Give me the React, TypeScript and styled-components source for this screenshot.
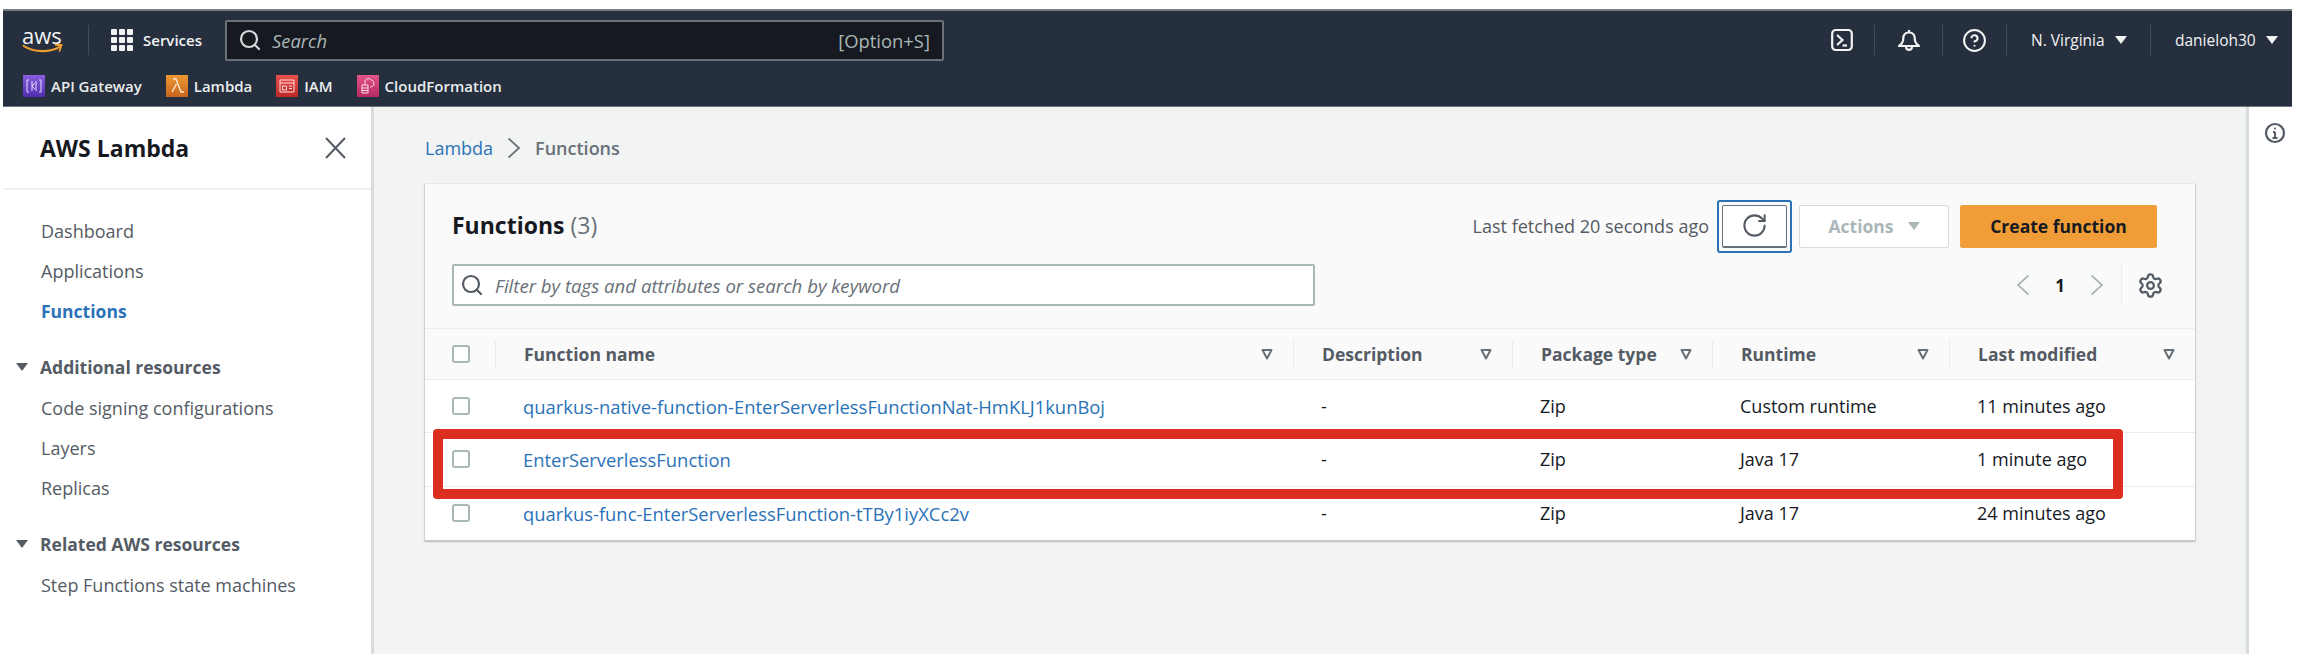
import React from "react";
import styled, { createGlobalStyle } from "styled-components";
import { RotateCw, Search, Settings, CircleHelp } from "lucide-react";

const GlobalStyle = createGlobalStyle`
  html, body {
    margin: 0;
    padding: 0;
    background: #fff;
    font-family: "Open Sans", "Noto Sans", sans-serif;
    color: #545b64;
  }
  * { box-sizing: border-box; }
`;

const Page = styled.div`
  width: 2300px;
  height: 668px;
  padding: 9px 8px 0 3px;
  overflow: hidden;
`;

const TopNav = styled.header`
  height: 98px;
  background: #252f3e;
  border-top: 2px solid #777c82;
  border-bottom: 1px solid #6c7480;
  color: #f2f3f3;
`;

const NavRow = styled.div`
  display: flex;
  align-items: center;
  height: 58px;
  padding-left: 19px;
`;

const Logo = styled.div`
  display: flex;
  flex-direction: column;
  width: 42px;
  height: 32px;
  svg { display: block; margin-top: -3px; }
`;

const LogoText = styled.span`
  height: 24px;
  line-height: 22px;
  font-size: 22px;
  color: #f2f3f3;
`;

const Divider = styled.span`
  width: 1px;
  height: 30px;
  margin-left: 24px;
  background: #414b59;
`;

const Services = styled.div`
  display: flex;
  align-items: center;
  gap: 10px;
  margin-left: 22px;
  font-size: 15px;
  font-weight: 600;
`;

const Dots = styled.div`
  display: grid;
  grid-template-columns: repeat(3, 6px);
  grid-auto-rows: 6px;
  gap: 2px;
  span { background: #f2f3f3; border-radius: 1px; }
`;

const SearchBox = styled.div`
  display: flex;
  align-items: center;
  width: 719px;
  height: 41px;
  margin-left: 23px;
  padding: 0 12px 0 11px;
  background: #16191f;
  border: 2px solid #687078;
  border-radius: 2px;
  color: #aab7b8;
  font-size: 18.4px;
`;

const SearchHint = styled.span`
  margin-left: 10px;
  font-style: italic;
`;

const Shortcut = styled.span`
  margin-left: auto;
`;

const NavRight = styled.div`
  display: flex;
  align-items: center;
  margin-left: auto;
`;

const NavIcon = styled.div<{ $width: number }>`
  display: flex;
  align-items: center;
  justify-content: center;
  width: ${(p) => p.$width}px;
  height: 30px;
  border-right: 1px solid #414b59;
  svg { display: block; }
`;

const NavMenu = styled.div<{ $width: number; $last?: boolean }>`
  display: flex;
  align-items: center;
  gap: 10px;
  width: ${(p) => p.$width}px;
  height: 30px;
  padding-left: 24px;
  border-right: ${(p) => (p.$last ? "none" : "1px solid #414b59")};
  font-size: 15.5px;
`;

const Caret = styled.span<{ $color?: string }>`
  display: inline-block;
  width: 0;
  height: 0;
  border-left: 6px solid transparent;
  border-right: 6px solid transparent;
  border-top: 8px solid ${(p) => p.$color ?? "#f2f3f3"};
`;

const Favorites = styled.div`
  display: flex;
  align-items: center;
  height: 37px;
  padding: 0 0 3px 20px;
  font-size: 15px;
  font-weight: 600;
`;

const Favorite = styled.div`
  display: flex;
  align-items: center;
  gap: 6px;
  margin-right: 24px;
  color: #eaeded;
`;

const ServiceIcon = styled.div<{ $from: string; $to: string }>`
  display: flex;
  align-items: center;
  justify-content: center;
  width: 22px;
  height: 22px;
  background: linear-gradient(0deg, ${(p) => p.$from}, ${(p) => p.$to});
`;

const Shell = styled.div`
  display: flex;
  height: 547px;
`;

const Sidebar = styled.aside`
  flex: none;
  width: 371px;
  background: #fff;
  border-right: 3px solid #d9dcdd;
`;

const SideHeader = styled.div`
  display: flex;
  align-items: center;
  justify-content: space-between;
  height: 83px;
  padding: 0 25px 0 37px;
  border-bottom: 2px solid #f0f1f1;
  color: #16191f;
  font-size: 23px;
  font-weight: 700;
`;

const SideList = styled.nav`
  padding-top: 21px;
`;

const SideItem = styled.div<{ $active?: boolean }>`
  height: 40px;
  padding-left: 38px;
  line-height: 40px;
  font-size: ${(p) => (p.$active ? 17.5 : 18)}px;
  font-weight: ${(p) => (p.$active ? 700 : 400)};
  color: ${(p) => (p.$active ? "#2a72b8" : "#545b64")};
`;

const SideSection = styled.div`
  display: flex;
  align-items: center;
  gap: 12px;
  height: 40px;
  margin-top: 16px;
  margin-bottom: 1px;
  padding-left: 13px;
  font-size: 17.5px;
  font-weight: 700;
`;

const Main = styled.main`
  flex: 1;
  padding: 0 51px;
  background: #f2f3f3;
`;

const Breadcrumb = styled.div`
  display: flex;
  align-items: center;
  gap: 14px;
  height: 77px;
  padding-top: 5px;
  font-size: 18px;
  font-weight: 600;
  color: #687078;
`;

const Crumb = styled.span`
  color: #2a72b8;
  font-weight: 400;
`;

const CardWrap = styled.div`
  position: relative;
`;

const Card = styled.section`
  background: #fff;
  border-bottom: 2px solid #c4cacc;
  box-shadow: 1px 0 1px rgba(0, 28, 36, 0.15), -1px 0 1px rgba(0, 28, 36, 0.15);
`;

const CardHead = styled.div`
  height: 145px;
  padding: 21px 38px 0 27px;
  background: #fafafa;
  border-bottom: 1px solid #eaeded;
`;

const TitleRow = styled.div`
  display: flex;
  align-items: center;
  height: 43px;
`;

const Title = styled.h2`
  margin: 0;
  padding-bottom: 4px;
  color: #16191f;
  font-size: 23px;
  font-weight: 700;
  span { margin-left: 6px; color: #687078; font-weight: 400; }
`;

const Fetched = styled.span`
  margin-left: auto;
  margin-right: 8px;
  padding-bottom: 2px;
  font-size: 18px;
`;

const Focus = styled.div`
  margin-right: 7px;
  padding: 3px;
  border: 2px solid #2a72b8;
  border-radius: 3px;
`;

const Button = styled.div<{ $width: number; $variant?: "plain" | "disabled" | "primary" }>`
  display: flex;
  align-items: center;
  justify-content: center;
  gap: 14px;
  width: ${(p) => p.$width}px;
  height: 43px;
  margin-left: ${(p) => (p.$variant === "primary" ? 11 : 0)}px;
  padding-bottom: 1px;
  border-radius: 2px;
  font-size: 17.5px;
  font-weight: 700;
  border: 1px solid
    ${(p) => (p.$variant === "primary" ? "#f0a03c" : p.$variant === "disabled" ? "#d5dbdb" : "#687078")};
  background: ${(p) => (p.$variant === "primary" ? "#f09d38" : "#fff")};
  color: ${(p) => (p.$variant === "primary" ? "#16191f" : p.$variant === "disabled" ? "#aab7b8" : "#545b64")};
  ${(p) => (p.$variant === "plain" ? "border-bottom-width: 2px;" : "")}
`;

const FilterRow = styled.div`
  display: flex;
  align-items: center;
  height: 42px;
  margin-top: 16px;
`;

const FilterBox = styled.div`
  display: flex;
  align-items: center;
  gap: 11px;
  width: 863px;
  height: 42px;
  padding-left: 6px;
  background: #fff;
  border: 2px solid #aab7b8;
  border-radius: 2px;
  color: #687078;
  font-size: 18.6px;
  font-style: italic;
`;

const Pager = styled.div`
  display: flex;
  align-items: center;
  margin-left: auto;
  margin-right: -7px;
  height: 42px;
  color: #aab7b8;
`;

const PageNumber = styled.span`
  margin: 0 25px;
  color: #16191f;
  font-size: 17px;
  font-weight: 700;
`;

const PagerTools = styled.div`
  display: flex;
  align-items: center;
  height: 42px;
  margin-left: 17px;
  padding-left: 15px;
  border-left: 1px solid #eaeded;
  color: #545b64;
`;

const TableGrid = styled.div`
  display: grid;
  grid-template-columns: 70px 798px 219px 200px 237px 1fr;
  align-items: center;
`;

const HeadRow = styled(TableGrid)`
  height: 51px;
  background: #fafafa;
  border-bottom: 1px solid #eaeded;
`;

const BodyRow = styled(TableGrid)<{ $last?: boolean }>`
  height: 53.33px;
  background: #fff;
  border-bottom: ${(p) => (p.$last ? "none" : "1px solid #eaeded")};
`;

const CheckCell = styled.div`
  padding-left: 27px;
`;

const Checkbox = styled.div`
  width: 18px;
  height: 18px;
  background: #fff;
  border: 2px solid #aab7b8;
  border-radius: 3px;
`;

const HeadCell = styled.div`
  display: flex;
  align-items: center;
  justify-content: space-between;
  height: 28px;
  padding: 0 20px 0 28px;
  border-left: 1px solid #eaeded;
  font-size: 17.5px;
  font-weight: 700;
`;

const Cell = styled.div`
  padding-left: 28px;
  color: #16191f;
  font-size: 18px;
`;

const FunctionLink = styled.span`
  color: #2a72b8;
  font-size: 18.4px;
`;

const RedBox = styled.div`
  position: absolute;
  left: 8px;
  top: 245px;
  width: 1690px;
  height: 70px;
  border: 10px solid #dc2e20;
  border-radius: 4px;
`;

const InfoRail = styled.aside`
  flex: none;
  width: 46px;
  padding: 15px 0 0 15px;
  background: #fff;
  border-left: 3px solid #d9dcdd;
  color: #545b64;
  svg { display: block; }
`;

const Chevron = ({ left }: { left?: boolean }) => (
  <svg width="14" height="22" viewBox="0 0 14 22" fill="none" stroke="currentColor" strokeWidth="1.8">
    <path d={left ? "M12.5 1.5L2 11l10.5 9.5" : "M1.5 1.5L12 11 1.5 20.5"} />
  </svg>
);

const SortIcon = () => (
  <svg width="12" height="12" viewBox="0 0 12 12" fill="none" stroke="#687078" strokeWidth="2">
    <path d="M1.5 2h9L6 10.5z" strokeLinejoin="round" />
  </svg>
);

const columns = ["Function name", "Description", "Package type", "Runtime", "Last modified"];

const rows = [
  ["quarkus-native-function-EnterServerlessFunctionNat-HmKLJ1kunBoj", "Zip", "Custom runtime", "11 minutes ago"],
  ["EnterServerlessFunction", "Zip", "Java 17", "1 minute ago"],
  ["quarkus-func-EnterServerlessFunction-tTBy1iyXCc2v", "Zip", "Java 17", "24 minutes ago"],
];

const App = () => {
  return (
    <>
      <GlobalStyle />
      <Page>
        <TopNav>
          <NavRow>
            <Logo>
              <LogoText>aws</LogoText>
              <svg width="42" height="12" viewBox="0 0 42 12" fill="none" stroke="#ec9b30" strokeLinecap="round">
                <path d="M1 2c11 7 27 7 37 1" strokeWidth="2.2" />
                <path d="M34 1l6 0-2 6" strokeWidth="2" />
              </svg>
            </Logo>
            <Divider />
            <Services>
              <Dots>
                {Array.from({ length: 9 }).map((_, i) => (
                  <span key={i} />
                ))}
              </Dots>
              Services
            </Services>
            <SearchBox>
              <Search size={24} color="#d5dbdb" strokeWidth={2.2} />
              <SearchHint>Search</SearchHint>
              <Shortcut>[Option+S]</Shortcut>
            </SearchBox>
            <NavRight>
              <NavIcon $width={66}>
                <svg width="22" height="24" viewBox="0 0 22 24" fill="none" stroke="#f2f3f3" strokeWidth="2.2">
                  <rect x="1.2" y="2" width="19.6" height="20" rx="3.5" />
                  <path d="M6 7l5.5 5L6 17" />
                  <path d="M11.5 17.5H16" />
                </svg>
              </NavIcon>
              <NavIcon $width={68}>
                <svg width="24" height="24" viewBox="0 0 24 24" fill="none" stroke="#f2f3f3" strokeWidth="2.2" strokeLinejoin="round">
                  <path d="M12 2v2.5" />
                  <path d="M12 4.5c-3.8 0-5.8 2.7-5.8 6.5 0 3-1.4 5-4.2 7h20c-2.8-2-4.2-4-4.2-7 0-3.8-2-6.5-5.8-6.5z" />
                  <path d="M9 18.5c0 4.5 6 4.5 6 0" />
                </svg>
              </NavIcon>
              <NavIcon $width={64}>
                <CircleHelp size={25} strokeWidth={2} />
              </NavIcon>
              <NavMenu $width={144}>
                N. Virginia <Caret />
              </NavMenu>
              <NavMenu $width={141} $last>
                danieloh30 <Caret />
              </NavMenu>
            </NavRight>
          </NavRow>
          <Favorites>
            <Favorite>
              <ServiceIcon $from="#4d2fae" $to="#8a5ce0">
                <svg width="16" height="16" viewBox="0 0 16 16" fill="none" stroke="#e6dcff" strokeWidth="1">
                  <path d="M3 2H1v12h2M13 2h2v12h-2M6 3v10M10 3v10M6 8l3-3M6 8l3 3" />
                </svg>
              </ServiceIcon>
              API Gateway
            </Favorite>
            <Favorite>
              <ServiceIcon $from="#c8641f" $to="#ee9a33">
                <svg width="16" height="18" viewBox="0 0 16 18" fill="none" stroke="#ffe9cc" strokeWidth="1.4">
                  <path d="M4 2h3l5 13h3M7.5 7L3 15" />
                </svg>
              </ServiceIcon>
              Lambda
            </Favorite>
            <Favorite>
              <ServiceIcon $from="#bb2a28" $to="#e8504c">
                <svg width="16" height="14" viewBox="0 0 16 14" fill="none" stroke="#ffd9d9" strokeWidth="1">
                  <path d="M1 1h14v12H1zM1 4h14M3.5 7h4v4h-4zM10 7h3M10 9.5h3" />
                </svg>
              </ServiceIcon>
              IAM
            </Favorite>
            <Favorite>
              <ServiceIcon $from="#b52a62" $to="#e2548a">
                <svg width="16" height="18" viewBox="0 0 16 18" fill="none" stroke="#ffdbe8" strokeWidth="1">
                  <path d="M2 8h6v8H2zM2 11h6M2 13.5h6M5 8V4c1-3 5-3 6-1 2 0 3 2 3 4s-2 3-4 3" />
                </svg>
              </ServiceIcon>
              CloudFormation
            </Favorite>
          </Favorites>
        </TopNav>
        <Shell>
          <Sidebar>
            <SideHeader>
              AWS Lambda
              <svg width="21" height="22" viewBox="0 0 21 22" fill="none" stroke="#545b64" strokeWidth="2">
                <path d="M1 1l19 20M20 1L1 21" />
              </svg>
            </SideHeader>
            <SideList>
              <SideItem>Dashboard</SideItem>
              <SideItem>Applications</SideItem>
              <SideItem $active>Functions</SideItem>
              <SideSection>
                <Caret $color="#545b64" />
                Additional resources
              </SideSection>
              <SideItem>Code signing configurations</SideItem>
              <SideItem>Layers</SideItem>
              <SideItem>Replicas</SideItem>
              <SideSection>
                <Caret $color="#545b64" />
                Related AWS resources
              </SideSection>
              <SideItem>Step Functions state machines</SideItem>
            </SideList>
          </Sidebar>
          <Main>
            <Breadcrumb>
              <Crumb>Lambda</Crumb>
              <Chevron />
              Functions
            </Breadcrumb>
            <CardWrap>
              <Card>
                <CardHead>
                  <TitleRow>
                    <Title>
                      Functions<span>(3)</span>
                    </Title>
                    <Fetched>Last fetched 20 seconds ago</Fetched>
                    <Focus>
                      <Button $width={65} $variant="plain">
                        <RotateCw size={27} strokeWidth={1.8} />
                      </Button>
                    </Focus>
                    <Button $width={150} $variant="disabled">
                      Actions <Caret $color="#aab7b8" />
                    </Button>
                    <Button $width={197} $variant="primary">
                      Create function
                    </Button>
                  </TitleRow>
                  <FilterRow>
                    <FilterBox>
                      <Search size={24} color="#545b64" strokeWidth={2.2} />
                      Filter by tags and attributes or search by keyword
                    </FilterBox>
                    <Pager>
                      <Chevron left />
                      <PageNumber>1</PageNumber>
                      <Chevron />
                      <PagerTools>
                        <Settings size={27} strokeWidth={2} />
                      </PagerTools>
                    </Pager>
                  </FilterRow>
                </CardHead>
                <HeadRow>
                  <CheckCell>
                    <Checkbox />
                  </CheckCell>
                  {columns.map((name) => (
                    <HeadCell key={name}>
                      {name}
                      <SortIcon />
                    </HeadCell>
                  ))}
                </HeadRow>
                {rows.map((row, i) => (
                  <BodyRow key={row[0]} $last={i === rows.length - 1}>
                    <CheckCell>
                      <Checkbox />
                    </CheckCell>
                    <Cell>
                      <FunctionLink>{row[0]}</FunctionLink>
                    </Cell>
                    <Cell>-</Cell>
                    <Cell>{row[1]}</Cell>
                    <Cell>{row[2]}</Cell>
                    <Cell>{row[3]}</Cell>
                  </BodyRow>
                ))}
              </Card>
              <RedBox />
            </CardWrap>
          </Main>
          <InfoRail>
            <svg width="22" height="22" viewBox="0 0 22 22" fill="none" stroke="#545b64" strokeWidth="2.2">
              <circle cx="11" cy="11" r="9" />
              <path d="M11 10v6M8.5 16h5M9 10h2" strokeWidth="2" />
              <circle cx="11" cy="6.5" r="1" fill="#545b64" stroke="none" />
            </svg>
          </InfoRail>
        </Shell>
      </Page>
    </>
  );
};

export default App;
